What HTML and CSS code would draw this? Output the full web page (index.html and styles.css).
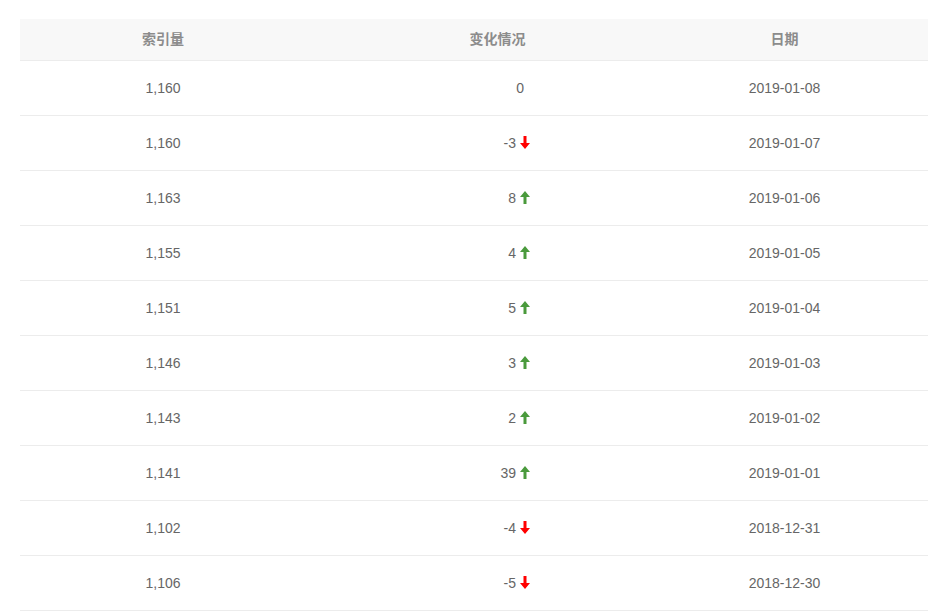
FILE: index.html
```html
<!DOCTYPE html>
<html lang="zh-CN">
<head>
    <meta charset="UTF-8">
    <meta name="viewport" content="width=device-width, initial-scale=1.0">
    <title>索引量变化</title>
    <link rel="stylesheet" href="styles.css">
</head>
<body>
    <table class="index-table">
        <colgroup>
            <col class="col-count">
            <col class="col-change">
            <col class="col-date">
        </colgroup>
        <thead>
            <tr>
                <th>索引量</th>
                <th>变化情况</th>
                <th class="date">日期</th>
            </tr>
        </thead>
        <tbody>
            <tr>
                <td>1,160</td>
                <td class="change flat">0</td>
                <td class="date">2019-01-08</td>
            </tr>
            <tr>
                <td>1,160</td>
                <td class="change">-3<svg class="arrow down" viewBox="0 0 10 13"><path d="M3.5 0h3v7H10L5 13 0 7h3.5z"/></svg></td>
                <td class="date">2019-01-07</td>
            </tr>
            <tr>
                <td>1,163</td>
                <td class="change">8<svg class="arrow up" viewBox="0 0 10 13"><path d="M3.5 13h3V6H10L5 0 0 6h3.5z"/></svg></td>
                <td class="date">2019-01-06</td>
            </tr>
            <tr>
                <td>1,155</td>
                <td class="change">4<svg class="arrow up" viewBox="0 0 10 13"><path d="M3.5 13h3V6H10L5 0 0 6h3.5z"/></svg></td>
                <td class="date">2019-01-05</td>
            </tr>
            <tr>
                <td>1,151</td>
                <td class="change">5<svg class="arrow up" viewBox="0 0 10 13"><path d="M3.5 13h3V6H10L5 0 0 6h3.5z"/></svg></td>
                <td class="date">2019-01-04</td>
            </tr>
            <tr>
                <td>1,146</td>
                <td class="change">3<svg class="arrow up" viewBox="0 0 10 13"><path d="M3.5 13h3V6H10L5 0 0 6h3.5z"/></svg></td>
                <td class="date">2019-01-03</td>
            </tr>
            <tr>
                <td>1,143</td>
                <td class="change">2<svg class="arrow up" viewBox="0 0 10 13"><path d="M3.5 13h3V6H10L5 0 0 6h3.5z"/></svg></td>
                <td class="date">2019-01-02</td>
            </tr>
            <tr>
                <td>1,141</td>
                <td class="change">39<svg class="arrow up" viewBox="0 0 10 13"><path d="M3.5 13h3V6H10L5 0 0 6h3.5z"/></svg></td>
                <td class="date">2019-01-01</td>
            </tr>
            <tr>
                <td>1,102</td>
                <td class="change">-4<svg class="arrow down" viewBox="0 0 10 13"><path d="M3.5 0h3v7H10L5 13 0 7h3.5z"/></svg></td>
                <td class="date">2018-12-31</td>
            </tr>
            <tr>
                <td>1,106</td>
                <td class="change">-5<svg class="arrow down" viewBox="0 0 10 13"><path d="M3.5 0h3v7H10L5 13 0 7h3.5z"/></svg></td>
                <td class="date">2018-12-30</td>
            </tr>
        </tbody>
    </table>
</body>
</html>
```

FILE: styles.css
```css
body {
    font-family: 'Liberation Sans', 'Noto Sans CJK SC', sans-serif;
    font-size: 14px;
    color: #666;
    background-color: white;
    margin: 0;
    padding: 19px 0 0 20px;
}
.index-table {
    width: 908px;
    border-collapse: collapse;
    table-layout: fixed;
}
.col-count {
    width: 286px;
}
.col-change {
    width: 383px;
}
.col-date {
    width: 239px;
}
.index-table th {
    height: 37px;
    padding: 0 0 4px;
    background-color: #f8f8f8;
    color: #8c8c8c;
    font-weight: bold;
    text-align: center;
    border-bottom: 1px solid #ececec;
}
.index-table td {
    height: 54px;
    padding: 0;
    text-align: center;
    border-bottom: 1px solid #ececec;
}
.index-table .date {
    padding-right: 48px;
}
.index-table th.date {
    padding-bottom: 4px;
}
.index-table .change {
    text-align: right;
    padding-right: 159px;
}
.index-table .change.flat {
    padding-right: 165px;
}
.arrow {
    width: 10px;
    height: 13px;
    margin-left: 4px;
    vertical-align: -1px;
}
.arrow.up {
    fill: #4a9a3c;
}
.arrow.down {
    fill: #f00;
}
```
